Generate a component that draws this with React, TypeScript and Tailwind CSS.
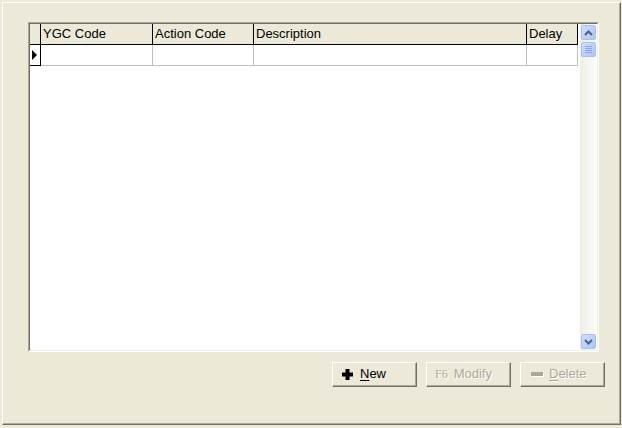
import React from "react";

const font = { fontFamily: '"Liberation Sans", Arial, sans-serif' };

function Chevron({ up }: { up: boolean }) {
  return (
    <svg width="9" height="6" viewBox="0 0 9 6">
      <path
        d={up ? "M1 5 L4.5 1.5 L8 5" : "M1 1 L4.5 4.5 L8 1"}
        fill="none"
        stroke="#4d6185"
        strokeWidth="2"
      />
    </svg>
  );
}

function ScrollButton({ children }: { children: React.ReactNode }) {
  return (
    <div className="w-[17px] h-[17px] p-[1px] shrink-0">
      <div className="w-full h-full rounded-[2px] border border-[#a9c0f4] bg-gradient-to-br from-[#d0ddfd] to-[#adc4f7] flex items-center justify-center">
        {children}
      </div>
    </div>
  );
}

function Button({
  children,
}: {
  children: React.ReactNode;
}) {
  return (
    <div className="w-[85px] h-[25px] border-t border-l border-white border-r border-b border-r-[#716f64] border-b-[#716f64] flex">
      <div className="flex-1 border-r border-b border-[#aca899] bg-[#ece9d8] flex items-center pl-[8px]">
        {children}
      </div>
    </div>
  );
}

export default function App() {
  return (
    <div className="w-[622px] h-[428px] bg-[#ece9d8] pt-[2px] pl-[2px]" style={font}>
      <div className="w-[619px] h-[423px] flex border-t border-l border-white border-r border-b border-r-[#716f64] border-b-[#716f64]">
        <div className="flex-1 border-r border-b border-[#aca899] flex flex-col pl-[25px] pt-[19px]">
          {/* grid */}
          <div className="w-[571px] h-[330px] flex border-t border-l border-[#aca899] border-r border-b border-r-white border-b-white">
            <div className="flex-1 flex border-t border-l border-[#716f64] border-r border-b border-r-[#f1efe2] border-b-[#f1efe2]">
              <div className="w-[550px] bg-white flex flex-col">
                {/* header */}
                <div className="flex h-[21px] text-[13px] text-black">
                  <div className="w-[11px] bg-[#ece9d8] border-r border-b border-black" />
                  <div className="w-[112px] bg-[#ece9d8] border-r border-b border-black pl-[2px] flex items-center">YGC Code</div>
                  <div className="w-[101px] bg-[#ece9d8] border-r border-b border-black pl-[2px] flex items-center">Action Code</div>
                  <div className="w-[273px] bg-[#ece9d8] border-r border-b border-black pl-[2px] flex items-center">Description</div>
                  <div className="w-[51px] bg-[#ece9d8] border-r border-b border-black pl-[2px] flex items-center">Delay</div>
                </div>
                {/* data row */}
                <div className="flex h-[21px]">
                  <div className="w-[11px] bg-white border-r border-b border-black flex items-center pl-[2px]">
                    <svg width="5" height="10" viewBox="0 0 5 10">
                      <path d="M0 0 L5 5 L0 10 Z" fill="#000" />
                    </svg>
                  </div>
                  <div className="w-[112px] border-r border-b border-[#c0c0c0]" />
                  <div className="w-[101px] border-r border-b border-[#c0c0c0]" />
                  <div className="w-[273px] border-r border-b border-[#c0c0c0]" />
                  <div className="w-[51px] border-r border-b border-[#c0c0c0]" />
                </div>
              </div>
              {/* scrollbar */}
              <div className="w-[17px] flex flex-col bg-gradient-to-r from-[#eeede5] to-[#fdfdfb]">
                <ScrollButton>
                  <Chevron up />
                </ScrollButton>
                <ScrollButton>
                  <div className="flex flex-col gap-[1px]">
                    <div className="w-[7px] h-[1px] bg-[#8aa6e6]" />
                    <div className="w-[7px] h-[1px] bg-[#8aa6e6]" />
                    <div className="w-[7px] h-[1px] bg-[#8aa6e6]" />
                    <div className="w-[7px] h-[1px] bg-[#8aa6e6]" />
                  </div>
                </ScrollButton>
                <div className="flex-1" />
                <ScrollButton>
                  <Chevron up={false} />
                </ScrollButton>
              </div>
            </div>
          </div>
          {/* buttons */}
          <div className="flex gap-[9px] ml-[304px] mt-[10px] text-[13px]">
            <Button>
              <svg width="11" height="11" viewBox="0 0 11 11" className="ml-[1px]">
                <rect x="0" y="3.5" width="11" height="4" fill="#000" />
                <rect x="3.5" y="0" width="4" height="11" fill="#000" />
              </svg>
              <span className="ml-[7px] text-black">
                <span className="underline underline-offset-2">N</span>ew
              </span>
            </Button>
            <Button>
              <span className="text-[#aca899] [text-shadow:1px_1px_0_#ffffff] text-[12px]" style={{ fontFamily: '"Liberation Serif", "Times New Roman", serif' }}>F6</span>
              <span className="ml-[6px] text-[#aca899] [text-shadow:1px_1px_0_#ffffff]">Modify</span>
            </Button>
            <Button>
              <div className="w-[12px] h-[4px] bg-[#aca899] ml-[2px] shadow-[1px_1px_0_#ffffff]" />
              <span className="ml-[6px] text-[#aca899] [text-shadow:1px_1px_0_#ffffff]">
                <span className="underline underline-offset-2">D</span>elete
              </span>
            </Button>
          </div>
        </div>
      </div>
    </div>
  );
}
